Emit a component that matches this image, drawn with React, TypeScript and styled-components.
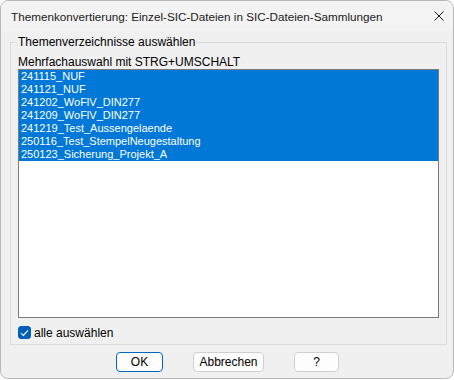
import * as React from "react";
import { useState } from "react";
import styled, { createGlobalStyle } from "styled-components";

const GlobalStyle = createGlobalStyle`
  html, body {
    margin: 0;
    padding: 0;
    background: #ffffff;
  }
  * {
    box-sizing: border-box;
  }
`;

const DialogWindow = styled.div`
  width: 454px;
  height: 379px;
  border: 1px solid #b9b9b9;
  border-radius: 8px;
  overflow: hidden;
  background: #f0f0f0;
  display: flex;
  flex-direction: column;
  font-family: "Liberation Sans", Arial, sans-serif;
  font-size: 12px;
  color: #000000;
`;

const TitleBar = styled.div`
  height: 30px;
  flex-shrink: 0;
  display: flex;
  align-items: center;
  justify-content: space-between;
  padding: 0 9px 0 10px;
  background: #f3f3f3;
  color: #1b1b1b;
`;

const TitleText = styled.span`
  font-size: 11.7px;
`;

const CloseButton = styled.div`
  width: 10px;
  height: 10px;
  display: flex;
  margin-top: -1px;
`;

const Body = styled.div`
  flex: 1;
  display: flex;
  flex-direction: column;
  padding: 4px 6px 0 9px;
`;

const GroupBox = styled.fieldset`
  margin: 0;
  padding: 4px 7px 5px 7px;
  border: 1px solid #dcdcdc;
  display: flex;
  flex-direction: column;
  min-width: 0;
`;

const GroupLegend = styled.legend`
  padding: 0 1px;
  margin-left: -1px;
  line-height: 15px;
  color: #000000;
`;

const HintLabel = styled.div`
  line-height: 14px;
  height: 14px;
  margin-top: 1px;
`;

const ListBox = styled.ul`
  list-style: none;
  margin: 0;
  padding: 0;
  height: 249px;
  border: 1px solid #7a7a7a;
  background: #ffffff;
  font-size: 11px;
  overflow: hidden;
`;

const ListItem = styled.li<{ $selected: boolean }>`
  height: 13px;
  line-height: 13px;
  padding-left: 2px;
  background: ${(p) => (p.$selected ? "#0078d7" : "transparent")};
  color: ${(p) => (p.$selected ? "#ffffff" : "#000000")};
  white-space: nowrap;
`;

const CheckRow = styled.label`
  display: flex;
  align-items: center;
  gap: 3px;
  margin-top: 8px;
  height: 13px;
`;

const CheckBoxBox = styled.span<{ $checked: boolean }>`
  width: 13px;
  height: 13px;
  border-radius: 3px;
  background: ${(p) => (p.$checked ? "#005fb8" : "#ffffff")};
  border: 1px solid ${(p) => (p.$checked ? "#005fb8" : "#8a8a8a")};
  display: flex;
  align-items: center;
  justify-content: center;
`;

const ButtonRow = styled.div`
  display: flex;
  justify-content: center;
  gap: 30px;
  margin-top: 7px;
  padding-right: 2px;
`;

const DialogButton = styled.button<{ $width: number; $default?: boolean }>`
  width: ${(p) => p.$width}px;
  height: 20px;
  padding: 0;
  border-radius: 4px;
  border: 1px solid ${(p) => (p.$default ? "#0067c0" : "#d0d0d0")};
  background: #fdfdfd;
  font-family: "Liberation Sans", Arial, sans-serif;
  font-size: 12px;
  color: #000000;
`;

const themes = [
  "241115_NUF",
  "241121_NUF",
  "241202_WoFlV_DIN277",
  "241209_WoFlV_DIN277",
  "241219_Test_Aussengelaende",
  "250116_Test_StempelNeugestaltung",
  "250123_Sicherung_Projekt_A",
];

export default function App(): JSX.Element {
  const [allSelected, setAllSelected] = useState(true);

  return (
    <>
      <GlobalStyle />
      <DialogWindow>
        <TitleBar>
          <TitleText>Themenkonvertierung: Einzel-SIC-Dateien in SIC-Dateien-Sammlungen</TitleText>
          <CloseButton>
            <svg width="10" height="10" viewBox="0 0 10 10">
              <path d="M0.5 0.5 L9.5 9.5 M9.5 0.5 L0.5 9.5" stroke="#1b1b1b" strokeWidth="1" fill="none" />
            </svg>
          </CloseButton>
        </TitleBar>
        <Body>
          <GroupBox>
            <GroupLegend>Themenverzeichnisse auswählen</GroupLegend>
            <HintLabel>Mehrfachauswahl mit STRG+UMSCHALT</HintLabel>
            <ListBox>
              {themes.map((t) => (
                <ListItem key={t} $selected={allSelected}>{t}</ListItem>
              ))}
            </ListBox>
            <CheckRow onClick={() => setAllSelected(!allSelected)}>
              <CheckBoxBox $checked={allSelected}>
                {allSelected && (
                  <svg width="9" height="8" viewBox="0 0 9 8">
                    <path d="M1 4.2 L3.4 6.4 L8 1.4" stroke="#ffffff" strokeWidth="1.1" fill="none" />
                  </svg>
                )}
              </CheckBoxBox>
              alle auswählen
            </CheckRow>
          </GroupBox>
          <ButtonRow>
            <DialogButton $width={47} $default>OK</DialogButton>
            <DialogButton $width={71}>Abbrechen</DialogButton>
            <DialogButton $width={45}>?</DialogButton>
          </ButtonRow>
        </Body>
      </DialogWindow>
    </>
  );
}
